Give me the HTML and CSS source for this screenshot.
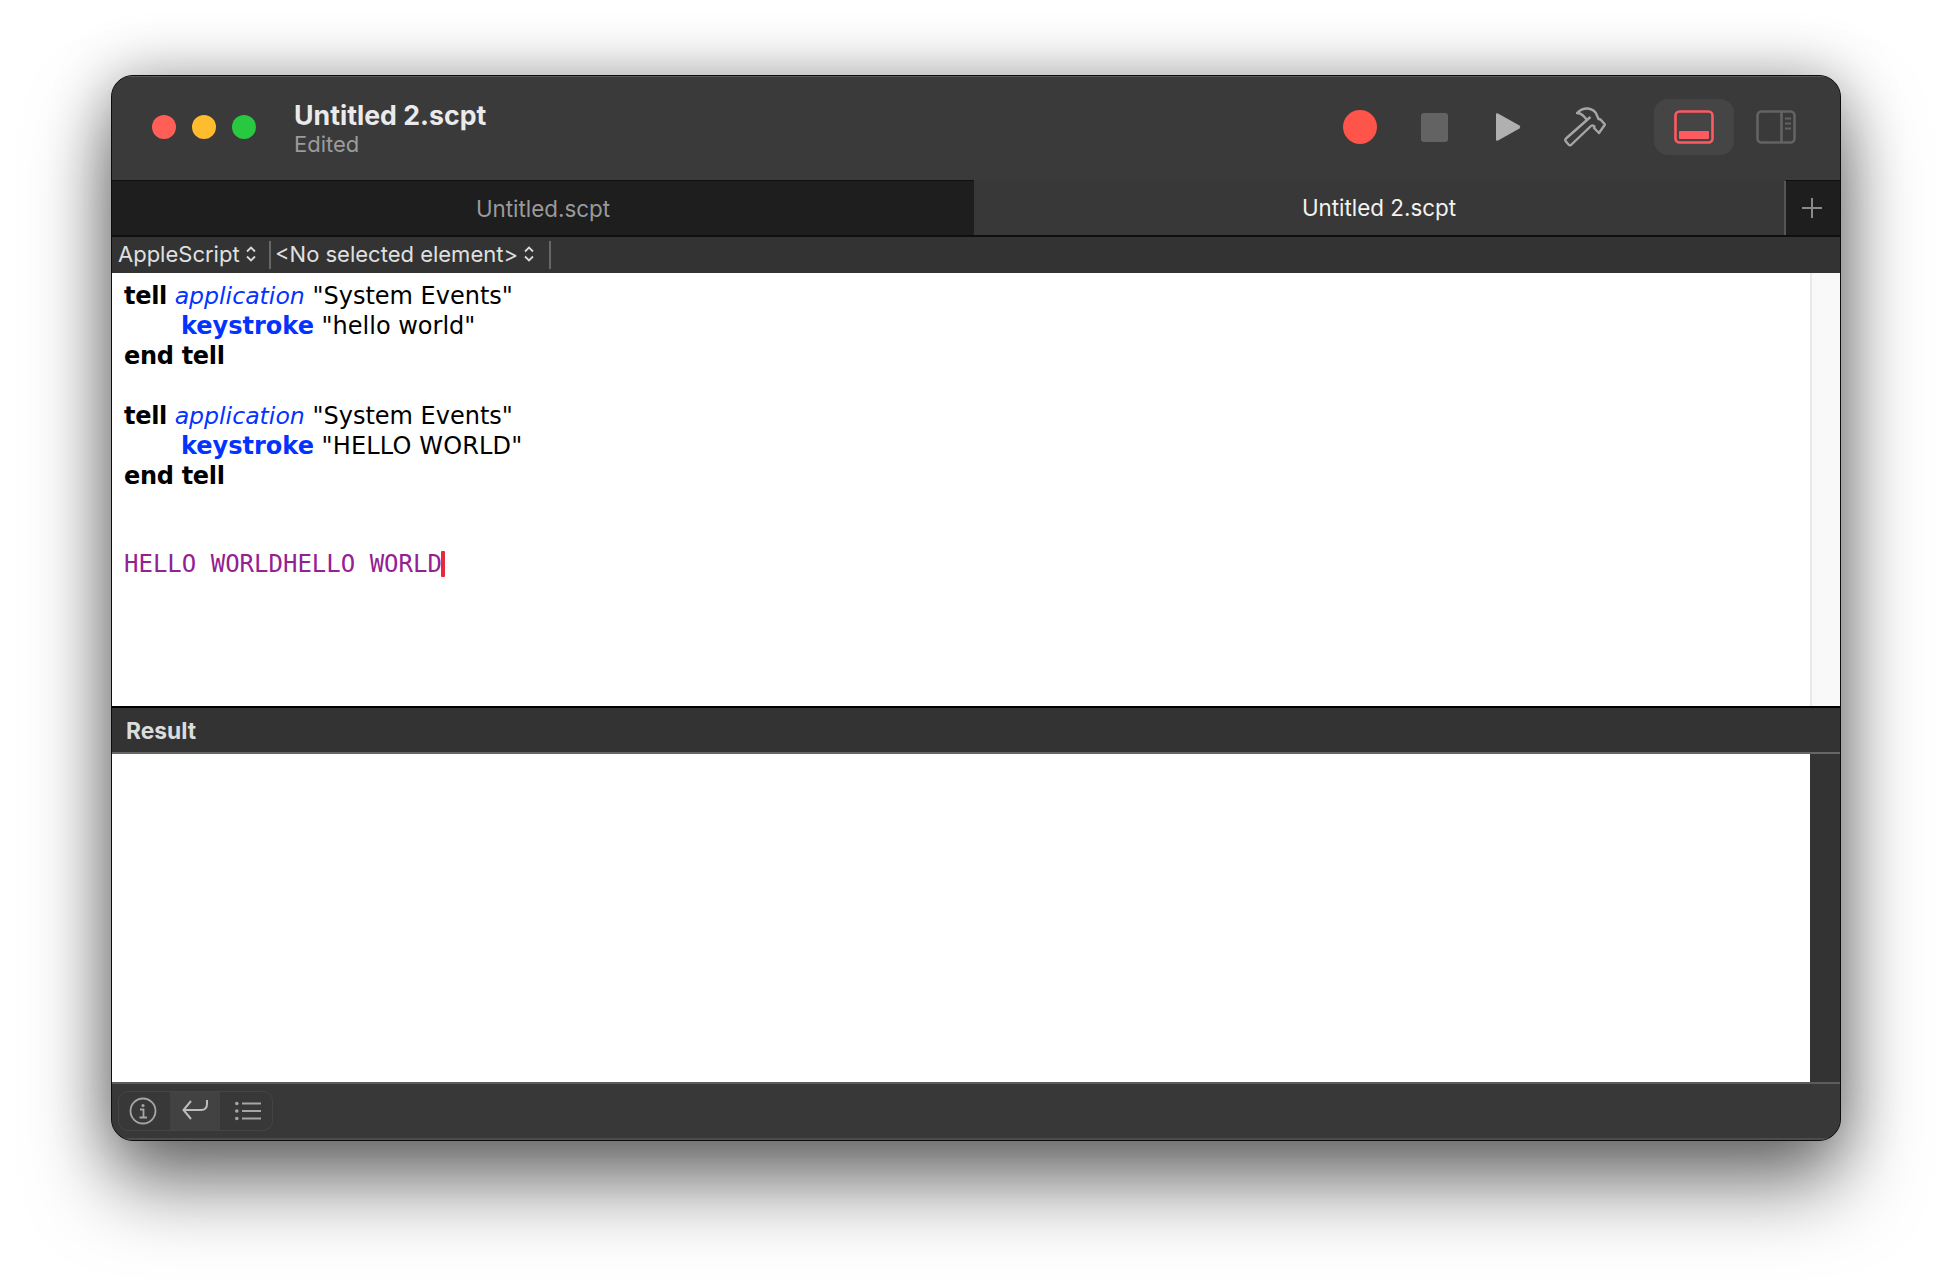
FILE: index.html
```html
<!DOCTYPE html>
<html lang="en">
<head>
<meta charset="utf-8">
<title>Untitled 2.scpt</title>
<link rel="stylesheet" href="styles.css">
</head>
<body>
<div class="window">
  <header class="titlebar">
    <div class="lights">
      <span class="light red"></span><span class="light yellow"></span><span class="light green"></span>
    </div>
    <div class="title">
      <div class="title-main">Untitled 2.scpt</div>
      <div class="title-sub">Edited</div>
    </div>
    <div class="tools">
      <span class="record"></span>
      <span class="stop"></span>
      <svg class="play" width="26" height="30" viewBox="0 0 26 30"><path d="M1 2.500 Q1 .5 3 1.500 L24.500 13.500 Q26 15 24.500 16.500 L3 28.500 Q1 29.500 1 27.500Z" fill="#b0b0b0"/></svg>
      <svg class="hammer" width="42" height="40" viewBox="0 0 42 40"><path d="M23 13 L2 31.500 Q.5 33 2 34.500 L4.500 37.500 Q6 39 7.500 37.500 L28 18 M23 13 L20 9.500 Q17 6 13 6 Q18 1 24 1.500 Q31 2.500 33 8.500 L34.500 12 L36.500 12.500 L41 17.500 L35 26 L30 21 L30.500 19.500 L28 18 M23 13 L26.500 10" fill="none" stroke="#a6a6a6" stroke-width="2.400" stroke-linejoin="round"/></svg>
      <span class="panel-btn">
        <svg width="40" height="34" viewBox="0 0 40 34"><rect x="1.500" y="1.500" width="37" height="31" rx="4" fill="none" stroke="#ff5a5f" stroke-width="2.600"/><rect x="5" y="21" width="30" height="8" rx="1" fill="#ff5a5f"/></svg>
      </span>
      <svg class="side-icon" width="40" height="34" viewBox="0 0 40 34"><rect x="1.500" y="1.500" width="37" height="31" rx="4" fill="none" stroke="#636363" stroke-width="2.600"/><path d="M25.500 2V32" stroke="#636363" stroke-width="2.600"/><path d="M29 8.500h6M29 13.500h6M29 18.500h6" stroke="#636363" stroke-width="2"/></svg>
    </div>
  </header>

  <nav class="tabs">
    <div class="tab">Untitled.scpt</div>
    <div class="tab tab-active">Untitled 2.scpt</div>
    <div class="tab-add">
      <svg width="22" height="22" viewBox="0 0 22 22"><path d="M11 1V21M1 11H21" stroke="#8a8a8a" stroke-width="2"/></svg>
    </div>
  </nav>

  <div class="navbar">
    <div class="pop pop-lang">AppleScript
      <svg class="updown" width="12" height="18" viewBox="0 0 12 18"><path d="M2 6.500 6 2.500 10 6.500M2 11.500 6 15.500 10 11.500" fill="none" stroke="#d8d8d8" stroke-width="1.800"/></svg>
    </div>
    <div class="pop pop-el">&lt;No selected element&gt;
      <svg class="updown" width="12" height="18" viewBox="0 0 12 18"><path d="M2 6.500 6 2.500 10 6.500M2 11.500 6 15.500 10 11.500" fill="none" stroke="#d8d8d8" stroke-width="1.800"/></svg>
    </div>
  </div>

  <main class="editor">
    <div class="code">
      <div class="code-line"><b class="kw-ctl">tell</b> <i class="kw-app">application</i> "System Events"</div>
      <div class="code-line indent"><b class="kw-cmd">keystroke</b> "hello world"</div>
      <div class="code-line"><b class="kw-ctl">end tell</b></div>
      <div class="code-line blank"></div>
      <div class="code-line"><b class="kw-ctl">tell</b> <i class="kw-app">application</i> "System Events"</div>
      <div class="code-line indent"><b class="kw-cmd">keystroke</b> <span class="caps">"HELLO WORLD"</span></div>
      <div class="code-line"><b class="kw-ctl">end tell</b></div>
      <div class="mono">HELLO WORLDHELLO WORLD<span class="caret"></span></div>
    </div>
    <div class="gutter"></div>
  </main>

  <div class="result-head">Result</div>

  <section class="result">
    <div class="result-body"></div>
    <div class="result-scroll"></div>
  </section>

  <footer class="bottom">
    <div class="seg">
      <span class="seg-item seg-first">
        <svg width="28" height="28" viewBox="0 0 28 28"><circle cx="14" cy="14" r="12.500" fill="none" stroke="#a6a6a6" stroke-width="1.800"/><circle cx="14" cy="8.500" r="1.600" fill="#a6a6a6"/><path d="M11 12.500h3.500v7.500M10.500 20.500h7.500" fill="none" stroke="#a6a6a6" stroke-width="1.800"/></svg>
      </span>
      <span class="seg-item seg-on">
        <svg width="26" height="22" viewBox="0 0 26 22"><path d="M25 1V5Q25 11 19 11H2M9 2 1.500 11 9 20" fill="none" stroke="#bdbdbd" stroke-width="2"/></svg>
      </span>
      <span class="seg-item seg-last">
        <svg width="26" height="20" viewBox="0 0 26 20"><path d="M7 2.500H26M7 10H26M7 17.500H26" stroke="#a6a6a6" stroke-width="2"/><circle cx="1.800" cy="2.500" r="1.800" fill="#a6a6a6"/><circle cx="1.800" cy="10" r="1.800" fill="#a6a6a6"/><circle cx="1.800" cy="17.500" r="1.800" fill="#a6a6a6"/></svg>
      </span>
    </div>
  </footer>
</div>
</body>
</html>
```
FILE: styles.css
```css
* { box-sizing: border-box; }
html, body { margin: 0; height: 100%; background: #fff; overflow: hidden; }
body { padding: 75px 111px 0 111px; font-family: Inter, "Liberation Sans", sans-serif; }

.window {
  width: 1730px;
  height: 1066px;
  display: flex;
  flex-direction: column;
  border: 1px solid #0c0c0c;
  border-radius: 22px;
  overflow: hidden;
  background: #383838;
  box-shadow: 0 44px 80px rgba(0,0,0,.52), 0 0 60px rgba(0,0,0,.3);
}

.titlebar {
  height: 104px;
  flex: none;
  display: flex;
  align-items: center;
  padding: 0 44px 0 40px;
  background: #3a3a3a;
  border-top: 1px solid #5a5a5a;
}
.lights { display: flex; gap: 16px; margin-bottom: 3px; }
.light { width: 24px; height: 24px; border-radius: 50%; }
.red { background: #ff5f57; }
.yellow { background: #febc2e; }
.green { background: #28c840; }

.title { margin-left: 38px; display: flex; flex-direction: column; margin-top: -1px; }
.title-main { font-size: 26.700px; font-weight: 700; line-height: 32px; color: #eaeaea; }
.title-sub { font-size: 22px; line-height: 27px; color: #9b9b9b; }

.tools { margin-left: auto; display: flex; align-items: center; margin-bottom: 3px; }
.record { width: 34px; height: 34px; border-radius: 50%; background: #ff5449; }
.stop { width: 27px; height: 29px; border-radius: 3px; background: #636363; margin-left: 44px; }
.play { margin-left: 47px; }
.hammer { margin-left: 43px; }
.panel-btn {
  width: 80px; height: 56px;
  margin-left: 48px;
  border-radius: 14px;
  background: #454545;
  display: flex; align-items: center; justify-content: center;
}
.side-icon { margin-left: 22px; }

.tabs {
  height: 57px;
  flex: none;
  display: flex;
  border-bottom: 2px solid #0f0f0f;
  font-size: 22.400px;
}
.tab {
  flex: none;
  width: 862px;
  display: flex; align-items: center; justify-content: center;
  background: #1e1e1e;
  color: #9a9a9a;
  border-top: 1px solid #0f0f0f;
}
.tab-active {
  width: 810px;
  background: #383838;
  color: #f2f2f2;
  border-top: 0;
}
.tab-add {
  flex: 1;
  display: flex; align-items: center; justify-content: center;
  padding-right: 3px;
  background: #1e1e1e;
  border-left: 2px solid #555;
  border-top: 1px solid #0f0f0f;
}

.navbar {
  height: 36px;
  flex: none;
  display: flex;
  align-items: center;
  background: #333;
  font-size: 22px;
  color: #e0e0e0;
}
.pop {
  height: 28px;
  padding-bottom: 2px;
  display: flex;
  align-items: center;
  gap: 5px;
  border-right: 2px solid #666;
  white-space: nowrap;
}
.pop-lang { width: 159px; padding-left: 6px; }
.pop-el { width: 280px; padding-left: 4px; }

.editor {
  flex: 1;
  min-height: 0;
  display: flex;
  background: #fff;
}
.code {
  flex: 1;
  padding: 8px 0 0 12px;
  font-family: "DejaVu Sans", Verdana, sans-serif;
  font-size: 24px;
  line-height: 30px;
  color: #000;
}
.code-line { height: 30px; white-space: pre; }
.indent { padding-left: 57px; }
.kw-ctl { letter-spacing: -.3px; }
.kw-app { color: #0433ff; font-size: 23.600px; }
.kw-cmd { color: #0433ff; }
.caps { letter-spacing: .15px; }
.mono {
  margin-top: 58px;
  font-family: "DejaVu Sans Mono", monospace;
  font-size: 24px;
  line-height: 30px;
  color: #942192;
  display: flex;
  align-items: center;
}
.caret { width: 4px; height: 26px; margin-left: -1px; background: #e8283c; border-radius: 1px; }
.gutter { width: 30px; flex: none; background: #f9f9f9; border-left: 2px solid #e9e9e9; }

.result-head {
  height: 48px;
  flex: none;
  padding-left: 14px;
  display: flex; align-items: center;
  background: #333;
  border-top: 2px solid #000;
  border-bottom: 2px solid #666;
  font-size: 22.800px;
  font-weight: 700;
  color: #dcdcdc;
}

.result { height: 328px; flex: none; display: flex; }
.result-body { flex: 1; background: #fff; }
.result-scroll { width: 30px; flex: none; background: #333; }

.bottom {
  height: 58px;
  flex: none;
  display: flex;
  align-items: center;
  padding-left: 6px;
  background: #383838;
  border-top: 2px solid #5c5c5c;
  border-bottom: 2px solid #4c4c4c;
}
.seg {
  display: flex;
  height: 40px;
  width: 155px;
  border: 1px solid #444;
  border-radius: 10px;
}
.seg-item { display: flex; align-items: center; justify-content: center; }
.seg-first { width: 51px; padding-right: 3px; }
.seg-on { width: 50px; background: #424242; padding-bottom: 3px; }
.seg-last { flex: 1; padding-left: 3px; }
```
